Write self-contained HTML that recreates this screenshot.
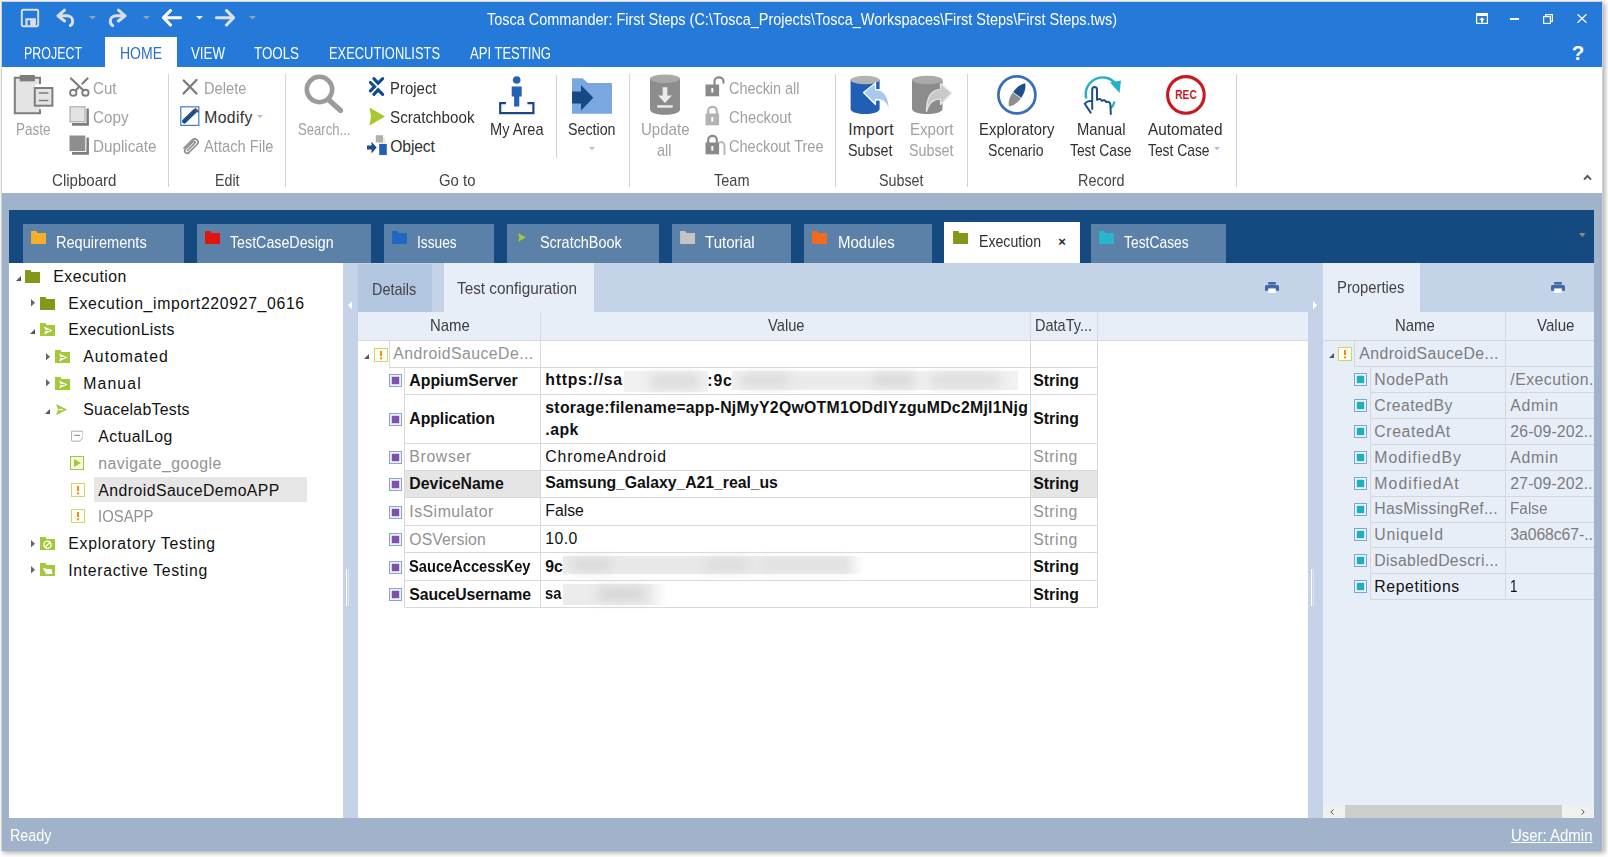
<!DOCTYPE html>
<html lang="en"><head><meta charset="utf-8"><title>Tosca Commander: First Steps</title><style>
html,body{margin:0;padding:0;}
body{width:1608px;height:857px;position:relative;overflow:hidden;background:#fff;font-family:'Liberation Sans', sans-serif;}
body>div,body>span,body>svg{position:absolute;display:block;}
body>span{white-space:pre;}
</style></head><body>
<div style="left:1.2px;top:1.2px;width:1601.6px;height:850px;background:#d3d2cd;box-shadow:2px 2px 5px rgba(0,0,0,.33);"></div>
<div style="left:2px;top:2px;width:1600px;height:849px;background:#a1b3cb;"></div>
<div style="left:2px;top:2px;width:1600px;height:65px;background:#257ad9;"></div>
<div style="left:2px;top:67px;width:1600px;height:126px;background:#fff;"></div>
<div style="left:105px;top:37px;width:72px;height:30px;background:#fff;"></div>
<div style="left:9.4px;top:210px;width:1584.7px;height:52.6px;background:#154a80;"></div>
<div style="left:9.3px;top:262.6px;width:333.7px;height:555.2px;background:#fff;"></div>
<div style="left:343px;top:262.6px;width:15px;height:555.2px;background:#c4d3e7;"></div>
<div style="left:358px;top:262.6px;width:950px;height:49.4px;background:#c4d3e7;"></div>
<div style="left:358px;top:312px;width:950px;height:28px;background:#e8eef8;"></div>
<div style="left:358px;top:340px;width:950px;height:477.8px;background:#fff;"></div>
<div style="left:1308px;top:262.6px;width:15px;height:555.2px;background:#c4d3e7;"></div>
<div style="left:1323px;top:262.6px;width:271.1px;height:49.4px;background:#c4d3e7;"></div>
<div style="left:1323px;top:312px;width:271.1px;height:505.8px;background:#e8eef8;"></div>
<div style="left:346px;top:569px;width:1.1px;height:37px;background:#fff;"></div>
<div style="left:348.1px;top:569px;width:0.9px;height:37px;background:#dde7f4;"></div>
<div style="left:1311px;top:569px;width:1.1px;height:37px;background:#fff;"></div>
<div style="left:1313.1px;top:569px;width:0.9px;height:37px;background:#dde7f4;"></div>
<svg style="left:348px;top:301px;" width="4.2" height="8.4" viewBox="0 0 4.2 8.4"><path d="M4.200 0v8.400L0 4.200z" fill="#fff"/></svg>
<svg style="left:1312.6px;top:301px;" width="4.2" height="8.4" viewBox="0 0 4.2 8.4"><path d="M0 0v8.400l4.200-4.200z" fill="#fff"/></svg>
<span style="left:487.3px;top:8.00px;line-height:23px;font-size:16.4px;color:#fff;transform:scaleX(0.8826);transform-origin:0 0;">Tosca Commander: First Steps (C:\Tosca_Projects\Tosca_Workspaces\First Steps\First Steps.tws)</span>
<span style="left:24.3px;top:43.00px;line-height:22px;font-size:15.7px;color:#fff;transform:scaleX(0.7921);transform-origin:0 0;">PROJECT</span>
<span style="left:120.3px;top:43.00px;line-height:22px;font-size:15.7px;color:#2a6fc4;transform:scaleX(0.8924);transform-origin:0 0;">HOME</span>
<span style="left:191.3px;top:43.00px;line-height:22px;font-size:15.7px;color:#fff;transform:scaleX(0.8480);transform-origin:0 0;">VIEW</span>
<span style="left:254.3px;top:43.00px;line-height:22px;font-size:15.7px;color:#fff;transform:scaleX(0.8506);transform-origin:0 0;">TOOLS</span>
<span style="left:329.3px;top:43.00px;line-height:22px;font-size:15.7px;color:#fff;transform:scaleX(0.8215);transform-origin:0 0;">EXECUTIONLISTS</span>
<span style="left:470.3px;top:43.00px;line-height:22px;font-size:15.7px;color:#fff;transform:scaleX(0.8321);transform-origin:0 0;">API TESTING</span>
<span style="left:1571.8px;top:38.00px;line-height:29px;font-size:20.5px;color:#fff;letter-spacing:-0.03px;font-weight:700;">?</span>
<span style="left:16.3px;top:119.00px;line-height:22px;font-size:15.7px;color:#a0a0a0;transform:scaleX(0.8598);transform-origin:0 0;">Paste</span>
<span style="left:93.3px;top:78.00px;line-height:22px;font-size:15.7px;color:#a0a0a0;transform:scaleX(0.9623);transform-origin:0 0;">Cut</span>
<span style="left:93.3px;top:107.00px;line-height:22px;font-size:15.7px;color:#a0a0a0;transform:scaleX(0.9693);transform-origin:0 0;">Copy</span>
<span style="left:93.3px;top:136.00px;line-height:22px;font-size:15.7px;color:#a0a0a0;transform:scaleX(0.9709);transform-origin:0 0;">Duplicate</span>
<span style="left:52.3px;top:170.00px;line-height:22px;font-size:15.7px;color:#444;transform:scaleX(0.9604);transform-origin:0 0;">Clipboard</span>
<span style="left:204.3px;top:78.00px;line-height:22px;font-size:15.7px;color:#a0a0a0;transform:scaleX(0.9370);transform-origin:0 0;">Delete</span>
<span style="left:204.3px;top:107.00px;line-height:22px;font-size:15.7px;color:#303030;letter-spacing:0.38px;">Modify</span>
<span style="left:204.3px;top:136.00px;line-height:22px;font-size:15.7px;color:#a0a0a0;transform:scaleX(0.9376);transform-origin:0 0;">Attach File</span>
<span style="left:215.3px;top:170.00px;line-height:22px;font-size:15.7px;color:#444;transform:scaleX(0.9058);transform-origin:0 0;">Edit</span>
<span style="left:298.3px;top:119.00px;line-height:22px;font-size:15.7px;color:#a0a0a0;transform:scaleX(0.8362);transform-origin:0 0;">Search...</span>
<span style="left:390.3px;top:78.00px;line-height:22px;font-size:15.7px;color:#303030;transform:scaleX(0.9523);transform-origin:0 0;">Project</span>
<span style="left:390.3px;top:107.00px;line-height:22px;font-size:15.7px;color:#303030;transform:scaleX(0.9690);transform-origin:0 0;">Scratchbook</span>
<span style="left:390.3px;top:136.00px;line-height:22px;font-size:15.7px;color:#303030;letter-spacing:-0.14px;">Object</span>
<span style="left:490.3px;top:119.00px;line-height:22px;font-size:15.7px;color:#303030;transform:scaleX(0.9297);transform-origin:0 0;">My Area</span>
<span style="left:439.3px;top:170.00px;line-height:22px;font-size:15.7px;color:#444;transform:scaleX(0.9511);transform-origin:0 0;">Go to</span>
<span style="left:568.3px;top:119.00px;line-height:22px;font-size:15.7px;color:#303030;transform:scaleX(0.9077);transform-origin:0 0;">Section</span>
<span style="left:641.3px;top:119.00px;line-height:22px;font-size:15.7px;color:#a0a0a0;transform:scaleX(0.9586);transform-origin:0 0;">Update</span>
<span style="left:657.3px;top:140.00px;line-height:22px;font-size:15.7px;color:#a0a0a0;transform:scaleX(0.9234);transform-origin:0 0;">all</span>
<span style="left:729.3px;top:78.00px;line-height:22px;font-size:15.7px;color:#a0a0a0;transform:scaleX(0.9188);transform-origin:0 0;">Checkin all</span>
<span style="left:729.3px;top:107.00px;line-height:22px;font-size:15.7px;color:#a0a0a0;transform:scaleX(0.9430);transform-origin:0 0;">Checkout</span>
<span style="left:729.3px;top:136.00px;line-height:22px;font-size:15.7px;color:#a0a0a0;transform:scaleX(0.9262);transform-origin:0 0;">Checkout Tree</span>
<span style="left:714.3px;top:170.00px;line-height:22px;font-size:15.7px;color:#444;transform:scaleX(0.9251);transform-origin:0 0;">Team</span>
<span style="left:848.3px;top:119.00px;line-height:22px;font-size:15.7px;color:#303030;letter-spacing:0.17px;">Import</span>
<span style="left:848.3px;top:140.00px;line-height:22px;font-size:15.7px;color:#303030;transform:scaleX(0.9111);transform-origin:0 0;">Subset</span>
<span style="left:910.3px;top:119.00px;line-height:22px;font-size:15.7px;color:#a0a0a0;transform:scaleX(0.9593);transform-origin:0 0;">Export</span>
<span style="left:909.3px;top:140.00px;line-height:22px;font-size:15.7px;color:#a0a0a0;transform:scaleX(0.9111);transform-origin:0 0;">Subset</span>
<span style="left:879.3px;top:170.00px;line-height:22px;font-size:15.7px;color:#444;transform:scaleX(0.9111);transform-origin:0 0;">Subset</span>
<span style="left:979.3px;top:119.00px;line-height:22px;font-size:15.7px;color:#303030;transform:scaleX(0.9516);transform-origin:0 0;">Exploratory</span>
<span style="left:988.3px;top:140.00px;line-height:22px;font-size:15.7px;color:#303030;transform:scaleX(0.8963);transform-origin:0 0;">Scenario</span>
<span style="left:1077.3px;top:119.00px;line-height:22px;font-size:15.7px;color:#303030;transform:scaleX(0.9426);transform-origin:0 0;">Manual</span>
<span style="left:1070.3px;top:140.00px;line-height:22px;font-size:15.7px;color:#303030;transform:scaleX(0.8817);transform-origin:0 0;">Test Case</span>
<span style="left:1148.3px;top:119.00px;line-height:22px;font-size:15.7px;color:#303030;transform:scaleX(0.9819);transform-origin:0 0;">Automated</span>
<span style="left:1148.3px;top:140.00px;line-height:22px;font-size:15.7px;color:#303030;transform:scaleX(0.8817);transform-origin:0 0;">Test Case</span>
<span style="left:1078.3px;top:170.00px;line-height:22px;font-size:15.7px;color:#444;transform:scaleX(0.9194);transform-origin:0 0;">Record</span>
<div style="left:168px;top:74px;width:1px;height:113px;background:#d4d4d4;"></div>
<div style="left:285px;top:74px;width:1px;height:113px;background:#d4d4d4;"></div>
<div style="left:629px;top:74px;width:1px;height:113px;background:#d4d4d4;"></div>
<div style="left:835px;top:74px;width:1px;height:113px;background:#d4d4d4;"></div>
<div style="left:967px;top:74px;width:1px;height:113px;background:#d4d4d4;"></div>
<div style="left:1236px;top:74px;width:1px;height:113px;background:#d4d4d4;"></div>
<div style="left:556px;top:75px;width:1px;height:83px;background:#d4d4d4;"></div>
<svg style="left:20px;top:8px;" width="20" height="20" viewBox="0 0 20 20"><rect x="1.8" y="1.8" width="16.4" height="16.4" rx="1.2" fill="none" stroke="#dcdfe6" stroke-width="1.9"/><path d="M5.4 10.2h10.5v7.2H5.4z M7.6 12.2v5.2h2.6v-5.2z" fill="#dcdfe6" fill-rule="evenodd"/></svg>
<svg style="left:56px;top:8px;" width="19" height="19" viewBox="0 0 19 19"><path d="M8.5 2.2L2 7.8l6.5 5.2" fill="none" stroke="#dcdfe6" stroke-width="3" stroke-linejoin="round" stroke-linecap="round"/><path d="M2.5 7.8h8.2c3.6 0 6 2.3 6 5.2 0 2-.9 3.7-2.3 4.6" fill="none" stroke="#dcdfe6" stroke-width="3" stroke-linecap="round"/></svg>
<svg style="left:108px;top:8px;" width="19" height="19" viewBox="0 0 19 19"><path d="M10.5 2.2L17 7.8l-6.500 5.2" fill="none" stroke="#dcdfe6" stroke-width="3" stroke-linejoin="round" stroke-linecap="round"/><path d="M16.5 7.800H8.300c-3.600 0-6 2.300-6 5.200 0 2 .9 3.700 2.300 4.600" fill="none" stroke="#dcdfe6" stroke-width="3" stroke-linecap="round"/></svg>
<svg style="left:162px;top:9px;" width="20" height="18" viewBox="0 0 20 18"><path d="M8.500 1.500L1.500 8.700l7 7.300M2 8.700h16.500" fill="none" stroke="#fff" stroke-width="3.1" stroke-linecap="round" stroke-linejoin="round"/></svg>
<svg style="left:215px;top:9px;" width="20" height="18" viewBox="0 0 20 18"><path d="M11.500 1.500L18.500 8.700l-7 7.300M18 8.700H1.500" fill="none" stroke="#dcdfe6" stroke-width="3.1" stroke-linecap="round" stroke-linejoin="round"/></svg>
<svg style="left:89px;top:16px;" width="7" height="4" viewBox="0 0 7 4"><path d="M0 0h7L3.500 3.600z" fill="#9a9fae"/></svg>
<svg style="left:142.5px;top:16px;" width="7" height="4" viewBox="0 0 7 4"><path d="M0 0h7L3.500 3.600z" fill="#9a9fae"/></svg>
<svg style="left:195.5px;top:16px;" width="7" height="4" viewBox="0 0 7 4"><path d="M0 0h7L3.500 3.600z" fill="#e8eef8"/></svg>
<svg style="left:249px;top:16px;" width="7" height="4" viewBox="0 0 7 4"><path d="M0 0h7L3.500 3.600z" fill="#9a9fae"/></svg>
<svg style="left:1476px;top:13px;" width="12" height="11" viewBox="0 0 12 11"><rect x=".6" y=".6" width="10.800" height="9.800" fill="none" stroke="#fff" stroke-width="1.200"/><rect x=".6" y=".6" width="10.800" height="2.400" fill="#fff"/><path d="M6 4.200l2.800 2.800H7v2.400H5V7H3.200z" fill="#fff"/></svg>
<div style="left:1510px;top:18.3px;width:9px;height:1.5px;background:#fff;"></div>
<svg style="left:1543px;top:14px;" width="10" height="10" viewBox="0 0 10 10"><rect x=".6" y="2.600" width="6.800" height="6.800" fill="none" stroke="#fff" stroke-width="1.200"/><path d="M2.600 2.600V.6h6.800v6.800h-2" fill="none" stroke="#fff" stroke-width="1.200"/></svg>
<svg style="left:1576.8px;top:13.5px;" width="10" height="9" viewBox="0 0 10 9"><path d="M.5 .3l9 8.400M9.500 .3l-9 8.400" stroke="#fff" stroke-width="1.300"/></svg>
<svg style="left:1583px;top:173.5px;" width="9" height="6.5" viewBox="0 0 9 6.5"><path d="M1 5.600L4.500 1.900l3.500 3.700" fill="none" stroke="#555" stroke-width="1.900"/></svg>
<svg style="left:13px;top:74px;" width="42" height="42" viewBox="0 0 42 42"><path d="M1.800 3.800H27v6.500h-4.500v19.500H27v9.400H1.800z" fill="#e4e4e4"/><path d="M27 10V3.800H1.800v35.400H27v-4" fill="none" stroke="#7d7d7d" stroke-width="2"/><rect x="6.800" y="1" width="15" height="6.400" fill="#7d7d7d"/><rect x="21.800" y="14" width="17.600" height="17.700" fill="#e4e4e4" stroke="#7d7d7d" stroke-width="2"/><path d="M25.800 19h9.600M25.800 26.500h9.600" stroke="#7d7d7d" stroke-width="1.600"/></svg>
<svg style="left:69px;top:77px;" width="21" height="20" viewBox="0 0 21 20"><path d="M2 1.500L14.500 13.500M18.500 1.500L13.500 6.500" stroke="#7d7d7d" stroke-width="2.300" stroke-linecap="round"/><path d="M10.500 9.500L6.500 13.500" stroke="#7d7d7d" stroke-width="2.300"/><ellipse cx="4.300" cy="15.800" rx="3.200" ry="3" fill="none" stroke="#7d7d7d" stroke-width="1.900"/><ellipse cx="16.400" cy="15.800" rx="3.200" ry="3" fill="none" stroke="#7d7d7d" stroke-width="1.900"/></svg>
<svg style="left:69px;top:106px;" width="21" height="21" viewBox="0 0 21 21"><path d="M3 16.9H17.4V2.6H19.9V19.7H3z" fill="#7d7d7d"/><rect x="1" y=".8" width="15" height="15" fill="#e3e3e3" stroke="#a0a0a0" stroke-width="1"/></svg>
<svg style="left:69px;top:135px;" width="21" height="21" viewBox="0 0 21 21"><path d="M3 16.9H17.4V2.6H19.9V19.7H3z" fill="#7d7d7d"/><rect x=".5" y=".5" width="15.800" height="15.600" fill="#8e8e8e"/></svg>
<svg style="left:181px;top:78px;" width="18" height="18" viewBox="0 0 18 18"><path d="M2.800 2.500L15.500 15.500M15.500 2L2.500 15.500" stroke="#7d7d7d" stroke-width="2.400" stroke-linecap="round"/></svg>
<svg style="left:180px;top:106px;" width="21" height="21" viewBox="0 0 21 21"><rect x=".8" y=".8" width="18" height="18.600" fill="#fff" stroke="#3c7cc8" stroke-width="1.200"/><path d="M4.200 15.300L14.800 5.200" stroke="#1c4e87" stroke-width="4.400" stroke-linecap="round"/><path d="M15.600 1.800l3.400 3.400-1.600 1.500-3.300-3.500z" fill="#555"/></svg>
<svg style="left:257px;top:114.5px;" width="6" height="3" viewBox="0 0 6 3"><path d="M0 0h6L3 3z" fill="#a8c0e0"/></svg>
<svg style="left:181px;top:136px;" width="19" height="20" viewBox="0 0 19 20"><path d="M6.500 14.500l7-7c1.200-1.200 0-3-1.500-1.800L4.500 13c-2.300 2.300.8 5.800 3.500 3.500l8-8c3-3.400-1.500-7.500-4.800-4.500L3 12" fill="none" stroke="#8c8c8c" stroke-width="1.700" stroke-linecap="round" stroke-linejoin="round"/></svg>
<svg style="left:302px;top:72px;" width="42" height="42" viewBox="0 0 42 42"><circle cx="17.500" cy="17.500" r="12.700" fill="none" stroke="#9b9b9b" stroke-width="4.600"/><path d="M27.500 28.500L38.500 38.500" stroke="#9b9b9b" stroke-width="5.200" stroke-linecap="round"/></svg>
<svg style="left:367px;top:76px;" width="19" height="22" viewBox="0 0 19 22"><path d="M6.900 2.650L11.100 7.200 15.650 2.650M3.400 6.500L7.600 10.700 3.400 14.900M6.900 18.400L11.100 13.850 15.650 18.400" fill="none" stroke="#114a8c" stroke-width="3.100" stroke-linecap="round" stroke-linejoin="miter"/></svg>
<svg style="left:368.5px;top:106.5px;" width="16" height="19" viewBox="0 0 16 19"><path d="M.5 .5L16 9.500 .5 18.500l1.500-9z" fill="#a9c72f"/></svg>
<svg style="left:366px;top:134px;" width="22" height="22" viewBox="0 0 22 22"><rect x="12.500" y="3.500" width="7" height="7" fill="#ededdf"/><rect x="9.800" y="1.200" width="7.200" height="7.200" fill="#b0b0b0"/><rect x="13.200" y="10" width="7.600" height="11" fill="#2261b5"/><path d="M1 11.600h4.500V7.800l5.200 5.800-5.200 5.800v-3.800H1z" fill="#1c4e87"/></svg>
<svg style="left:497px;top:74px;" width="40" height="42" viewBox="0 0 40 42"><circle cx="19.700" cy="6" r="3.800" fill="#2261b5"/><path d="M14.700 12.500h10v10h-2.400v10.100h-5.200V22.500h-2.400z" fill="#2261b5"/><path d="M9 29.200H3.200v9.900h33.200v-9.900h-6" fill="none" stroke="#1c4786" stroke-width="2.200"/></svg>
<svg style="left:571px;top:77px;" width="42" height="38" viewBox="0 0 42 38"><path d="M1 1.300h10.500L17 6h24v30.800H1z" fill="#7aa7e0"/><path d="M1 14.500h9V8l12.300 12.700L10 33.400v-7H1z" fill="#174a82"/></svg>
<svg style="left:588.5px;top:147px;" width="6" height="3.2" viewBox="0 0 6 3.2"><path d="M0 0h6L3 3.200z" fill="#a8c0e0"/></svg>
<svg style="left:648px;top:73px;" width="34" height="43" viewBox="0 0 34 43"><path d="M2 5.6v31c0 7 30 7 30 0v-31z" fill="#8c8c8c"/><ellipse cx="17.0" cy="5.800000000000001" rx="15.0" ry="4.200" fill="#a9a9a9"/><path d="M14.700 14.200h4.600v8.200h4.600L17 30l-6.900-7.600h4.600z" fill="#ebebeb"/><rect x="9.200" y="32.200" width="15.500" height="2.500" fill="#ebebeb"/></svg>
<svg style="left:704.5px;top:76px;" width="21" height="21" viewBox="0 0 21 21"><path d="M9.500 9.500V5.500c0-5.500 9-5.500 9 0v2" fill="none" stroke="#8a8a8a" stroke-width="2.200"/><rect x=".5" y="8.500" width="13.600" height="11.800" fill="#8a8a8a"/><rect x="6.300" y="12" width="2" height="4.600" fill="#fff"/></svg>
<svg style="left:704.5px;top:105px;" width="21" height="21" viewBox="0 0 21 21"><path d="M3.200 9.500V6c0-5.500 8.600-5.500 8.600 0v3.500" fill="none" stroke="#b3b3b3" stroke-width="2.200"/><rect x=".5" y="8.500" width="13.600" height="11.800" fill="#b3b3b3"/><rect x="6.300" y="12" width="2" height="4.600" fill="#fff"/></svg>
<svg style="left:704.5px;top:134px;" width="21" height="21" viewBox="0 0 21 21"><path d="M14 8.500c3-1 5.500 0 5.500 3.500v12h-3" fill="none" stroke="#b9b9b9" stroke-width="2"/><path d="M3.200 9.500V6c0-5.500 8.600-5.500 8.600 0v3.500" fill="none" stroke="#8a8a8a" stroke-width="2.200"/><rect x=".5" y="8.500" width="13.600" height="11.800" fill="#8a8a8a"/><rect x="6.300" y="12" width="2" height="4.600" fill="#fff"/></svg>
<svg style="left:848px;top:73px;" width="46" height="44" viewBox="0 0 46 44"><path d="M2.6 6.8v29c0 7 29 7 29 0v-29z" fill="#1f5fb4"/><ellipse cx="17.1" cy="7.0" rx="14.5" ry="4.200" fill="#b3b3b3"/><path d="M15.500 19.500L27.500 10v6.500c9.500 0 14 7 14 22.500-2.500-9.500-6.500-12.500-14-12.500V31.500z" fill="#a6c9f0" stroke="#fff" stroke-width="1.300" stroke-linejoin="round"/></svg>
<svg style="left:909px;top:73px;" width="46" height="44" viewBox="0 0 46 44"><path d="M3 6.8v29c0 7 30.5 7 30.5 0v-29z" fill="#8c8c8c"/><ellipse cx="18.25" cy="7.0" rx="15.25" ry="4.200" fill="#aaaaaa"/><path d="M42.500 20L31.500 10.500v6c-9.500 0-14 7-14 22 3-9.500 7-12.500 14-12.500v5.500z" fill="#c9c9c9" stroke="#e6e6e6" stroke-width="1.200" stroke-linejoin="round"/></svg>
<svg style="left:995px;top:72.5px;" width="44" height="44" viewBox="0 0 44 44"><circle cx="21.900" cy="21.900" r="18.500" fill="none" stroke="#3a6ebd" stroke-width="2.700"/><path d="M17.900 19.300Q23.500 11.500 30.200 10.300Q31.500 17.500 26 25.200z" fill="#1c4e87"/><path d="M17.900 19.300L26 25.200Q20.500 32.500 14 33.600Q12.500 27 17.900 19.300z" fill="#8e8e8e"/><path d="M17.900 19.300l8.100 5.900" stroke="#dfe7f3" stroke-width="1"/></svg>
<svg style="left:1078px;top:74px;" width="46" height="42" viewBox="0 0 46 42"><path d="M8.300 24.500A16.800 16.800 0 0 1 37.500 9.500" fill="none" stroke="#23b1c4" stroke-width="2.400"/><path d="M32 8.500L43 6.500 41.500 19z" fill="#23b1c4"/><path d="M36.500 27.500c-.6 2.600-1.800 4.800-3.500 6.500" fill="none" stroke="#23b1c4" stroke-width="2.200"/><path d="M14.200 35V15.500c0-3.400 4.800-3.400 4.800 0v10.300c2.200-1.400 4.300-.8 4.700 1 2-1.200 4-.5 4.400 1.300 2.200-.9 4.200.2 4.300 2.600l.4 9.300M14.200 27.500c-2.500-1.300-6 .2-7.500 2.300l6 8.800" fill="none" stroke="#1c4e87" stroke-width="2" stroke-linejoin="round" stroke-linecap="round"/></svg>
<svg style="left:1163.5px;top:72.5px;" width="44" height="44" viewBox="0 0 44 44"><circle cx="21.900" cy="21.900" r="18.300" fill="none" stroke="#c9181f" stroke-width="3.100"/><text x="22" y="25.700" text-anchor="middle" font-family="Liberation Sans, sans-serif" font-weight="700" font-size="13" textLength="21.500" lengthAdjust="spacingAndGlyphs" fill="#c9181f">REC</text></svg>
<svg style="left:1214.4px;top:147.2px;" width="6" height="3.2" viewBox="0 0 6 3.2"><path d="M0 0h6L3 3.200z" fill="#a8c0e0"/></svg>
<svg style="left:1264.5px;top:281.5px;" width="14" height="11" viewBox="0 0 14 11"><rect x="3.200" y="0" width="7.600" height="2.600" fill="#3f6aa6"/><path d="M0 4.500a1.500 1.500 0 0 1 1.500-1.500h11a1.500 1.500 0 0 1 1.500 1.500v4.300H0z" fill="#3f6aa6"/><rect x="3.200" y="6.400" width="7.600" height="4.400" fill="#fff"/></svg>
<svg style="left:1550.5px;top:281.5px;" width="14" height="11" viewBox="0 0 14 11"><rect x="3.200" y="0" width="7.600" height="2.600" fill="#3f6aa6"/><path d="M0 4.500a1.500 1.500 0 0 1 1.500-1.500h11a1.500 1.500 0 0 1 1.500 1.500v4.300H0z" fill="#3f6aa6"/><rect x="3.200" y="6.400" width="7.600" height="4.400" fill="#fff"/></svg>
<div style="left:23px;top:223.6px;width:161px;height:39px;background:#5b81a9;"></div>
<span style="left:56.3px;top:232.00px;line-height:22px;font-size:15.8px;color:#fff;transform:scaleX(0.9223);transform-origin:0 0;">Requirements</span>
<svg style="left:31.3px;top:230.5px;" width="15.2" height="13.6" viewBox="0 0 15.5 14"><path d="M0 0h5.5l1 2H15.5v12H0z" fill="#f9ae2b"/></svg>
<div style="left:197px;top:223.6px;width:174px;height:39px;background:#5b81a9;"></div>
<span style="left:230.3px;top:232.00px;line-height:22px;font-size:15.8px;color:#fff;transform:scaleX(0.9015);transform-origin:0 0;">TestCaseDesign</span>
<svg style="left:205.3px;top:230.5px;" width="15.2" height="13.6" viewBox="0 0 15.5 14"><path d="M0 0h5.5l1 2H15.5v12H0z" fill="#e0160e"/></svg>
<div style="left:384px;top:223.6px;width:110px;height:39px;background:#5b81a9;"></div>
<span style="left:417.3px;top:232.00px;line-height:22px;font-size:15.8px;color:#fff;transform:scaleX(0.8695);transform-origin:0 0;">Issues</span>
<svg style="left:392.3px;top:230.5px;" width="15.2" height="13.6" viewBox="0 0 15.5 14"><path d="M0 0h5.5l1 2H15.5v12H0z" fill="#2366c0"/></svg>
<div style="left:507px;top:223.6px;width:152px;height:39px;background:#5b81a9;"></div>
<span style="left:540.3px;top:232.00px;line-height:22px;font-size:15.8px;color:#fff;transform:scaleX(0.9122);transform-origin:0 0;">ScratchBook</span>
<div style="left:672px;top:223.6px;width:119px;height:39px;background:#5b81a9;"></div>
<span style="left:705.3px;top:232.00px;line-height:22px;font-size:15.8px;color:#fff;transform:scaleX(0.9540);transform-origin:0 0;">Tutorial</span>
<svg style="left:680.3px;top:230.5px;" width="15.2" height="13.6" viewBox="0 0 15.5 14"><path d="M0 0h5.5l1 2H15.5v12H0z" fill="#c4c4c4"/></svg>
<div style="left:804px;top:223.6px;width:128px;height:39px;background:#5b81a9;"></div>
<span style="left:838.3px;top:232.00px;line-height:22px;font-size:15.8px;color:#fff;transform:scaleX(0.9495);transform-origin:0 0;">Modules</span>
<svg style="left:812.3px;top:230.5px;" width="15.2" height="13.6" viewBox="0 0 15.5 14"><path d="M0 0h5.5l1 2H15.5v12H0z" fill="#f26a1b"/></svg>
<div style="left:1091px;top:223.6px;width:135px;height:39px;background:#5b81a9;"></div>
<span style="left:1124.3px;top:232.00px;line-height:22px;font-size:15.8px;color:#fff;transform:scaleX(0.8773);transform-origin:0 0;">TestCases</span>
<svg style="left:1099.3px;top:230.5px;" width="15.2" height="13.6" viewBox="0 0 15.5 14"><path d="M0 0h5.5l1 2H15.5v12H0z" fill="#27b6cc"/></svg>
<svg style="left:517.5px;top:233.3px;" width="8" height="8.8" viewBox="0 0 11 12"><path d="M0 0L11 6 0 12l2-6z" fill="#a5c83b"/></svg>
<div style="left:944px;top:222px;width:136px;height:40.6px;background:#fff;"></div>
<svg style="left:953.3px;top:230.5px;" width="15.2" height="13.6" viewBox="0 0 15.5 14"><path d="M0 0h5.5l1 2H15.5v12H0z" fill="#85961a"/></svg>
<span style="left:979.3px;top:231.00px;line-height:22px;font-size:15.8px;color:#303030;transform:scaleX(0.8937);transform-origin:0 0;">Execution</span>
<span style="left:1058.3px;top:233.00px;line-height:18px;font-size:13px;color:#222;letter-spacing:0.91px;font-weight:700;">×</span>
<svg style="left:1579.2px;top:233px;" width="6.6" height="4.2" viewBox="0 0 6.6 4.2"><path d="M0 0h6.600L3.300 4.200z" fill="#8d8a88"/></svg>
<div style="left:94px;top:477px;width:213px;height:25px;background:#e6e6e6;"></div>
<svg style="left:15.8px;top:275.6px;" width="5" height="5" viewBox="0 0 5 5"><path d="M5 0v5H0z" fill="#555"/></svg>
<svg style="left:24.5px;top:270px;" width="15" height="13" viewBox="0 0 15 13"><path d="M0 0h5.5l1 2H15v13H0z" fill="#85961a"/></svg>
<span style="left:53.3px;top:266.00px;line-height:22px;font-size:15.8px;color:#111;letter-spacing:0.46px;">Execution</span>
<svg style="left:31px;top:299.38px;" width="4" height="7.4" viewBox="0 0 4 7.4"><path d="M0 0l4 3.7-4 3.7z" fill="#666"/></svg>
<svg style="left:39.5px;top:296.68px;" width="15" height="13" viewBox="0 0 15 13"><path d="M0 0h5.5l1 2H15v13H0z" fill="#85961a"/></svg>
<span style="left:68.3px;top:293.00px;line-height:22px;font-size:15.8px;color:#111;letter-spacing:0.66px;">Execution_import220927_0616</span>
<svg style="left:29.8px;top:328.96px;" width="5" height="5" viewBox="0 0 5 5"><path d="M5 0v5H0z" fill="#555"/></svg>
<svg style="left:39.5px;top:323.36px;" width="15" height="13" viewBox="0 0 15 13"><path d="M0 0h5.5l1 2H15v13H0z" fill="#a5c83b"/><path d="M4 3.5l8.5 4-8.5 4 1.8-4z" fill="#fff"/><path d="M5.8 7.5h4" stroke="#a5c83b" stroke-width="1"/></svg>
<span style="left:68.3px;top:319.00px;line-height:22px;font-size:15.8px;color:#111;letter-spacing:0.33px;">ExecutionLists</span>
<svg style="left:46px;top:352.74px;" width="4" height="7.4" viewBox="0 0 4 7.4"><path d="M0 0l4 3.7-4 3.7z" fill="#666"/></svg>
<svg style="left:54.5px;top:350.04px;" width="15" height="13" viewBox="0 0 15 13"><path d="M0 0h5.5l1 2H15v13H0z" fill="#a5c83b"/><path d="M4 3.5l8.5 4-8.5 4 1.8-4z" fill="#fff"/><path d="M5.8 7.5h4" stroke="#a5c83b" stroke-width="1"/></svg>
<span style="left:83.3px;top:346.00px;line-height:22px;font-size:15.8px;color:#111;letter-spacing:1.01px;">Automated</span>
<svg style="left:46px;top:379.42px;" width="4" height="7.4" viewBox="0 0 4 7.4"><path d="M0 0l4 3.7-4 3.7z" fill="#666"/></svg>
<svg style="left:54.5px;top:376.72px;" width="15" height="13" viewBox="0 0 15 13"><path d="M0 0h5.5l1 2H15v13H0z" fill="#a5c83b"/><path d="M4 3.5l8.5 4-8.5 4 1.8-4z" fill="#fff"/><path d="M5.8 7.5h4" stroke="#a5c83b" stroke-width="1"/></svg>
<span style="left:83.3px;top:373.00px;line-height:22px;font-size:15.8px;color:#111;letter-spacing:1.11px;">Manual</span>
<svg style="left:44.8px;top:409px;" width="5" height="5" viewBox="0 0 5 5"><path d="M5 0v5H0z" fill="#555"/></svg>
<svg style="left:56.3px;top:404.1px;" width="11.2" height="11.2" viewBox="0 0 13 13"><path d="M0 0l13 6.5L0 13l2.5-6.5z" fill="#a5c83b"/><path d="M3 6.5h5" stroke="#fff" stroke-width="1.5"/></svg>
<span style="left:83.3px;top:399.00px;line-height:22px;font-size:15.8px;color:#111;letter-spacing:0.29px;">SuacelabTests</span>
<svg style="left:71px;top:429.78px;" width="12.4" height="13.2" viewBox="0 0 15 14"><path d="M1.5 .5h12a1 1 0 0 1 1 1v7l-4 4h-9a1 1 0 0 1-1-1v-10a1 1 0 0 1 1-1z" fill="#fff" stroke="#9a9a9a"/><path d="M4 5.5h7" stroke="#9a9a9a" stroke-width="1.5"/></svg>
<span style="left:98.3px;top:426.00px;line-height:22px;font-size:15.8px;color:#111;letter-spacing:0.47px;">ActualLog</span>
<svg style="left:70px;top:456.06px;" width="14" height="14" viewBox="0 0 14 14"><rect x=".5" y=".5" width="13" height="13" fill="#f4f9e2" stroke="#a5c83b"/><path d="M4 3l7 4-7 4z" fill="#a5c83b"/></svg>
<span style="left:98.3px;top:453.00px;line-height:22px;font-size:15.8px;color:#929292;letter-spacing:0.50px;">navigate_google</span>
<svg style="left:70.5px;top:482.74px;" width="14" height="14" viewBox="0 0 14 14"><rect x=".5" y=".5" width="13" height="13" fill="#fffdf0" stroke="#c9d76e"/><rect x="6" y="3" width="2" height="5" fill="#f08a1c"/><rect x="6" y="9.3" width="2" height="2" fill="#f08a1c"/></svg>
<span style="left:98.3px;top:480.00px;line-height:22px;font-size:15.8px;color:#111;letter-spacing:0.45px;">AndroidSauceDemoAPP</span>
<svg style="left:70.5px;top:509.42px;" width="14" height="14" viewBox="0 0 14 14"><rect x=".5" y=".5" width="13" height="13" fill="#fffdf0" stroke="#c9d76e"/><rect x="6" y="3" width="2" height="5" fill="#f08a1c"/><rect x="6" y="9.3" width="2" height="2" fill="#f08a1c"/></svg>
<span style="left:98.3px;top:506.00px;line-height:22px;font-size:15.8px;color:#929292;transform:scaleX(0.9434);transform-origin:0 0;">IOSAPP</span>
<svg style="left:31px;top:539.5px;" width="4" height="7.4" viewBox="0 0 4 7.4"><path d="M0 0l4 3.7-4 3.7z" fill="#666"/></svg>
<svg style="left:39.5px;top:536.8px;" width="15" height="13" viewBox="0 0 15 13"><path d="M0 0h5.5l1 2H15v13H0z" fill="#a5c83b"/><circle cx="7.5" cy="7.8" r="3.6" fill="none" stroke="#fff" stroke-width="1.3"/><path d="M5 10.3l5-5" stroke="#fff" stroke-width="1.3"/></svg>
<span style="left:68.3px;top:533.00px;line-height:22px;font-size:15.8px;color:#111;letter-spacing:0.71px;">Exploratory Testing</span>
<svg style="left:31px;top:566.18px;" width="4" height="7.4" viewBox="0 0 4 7.4"><path d="M0 0l4 3.7-4 3.7z" fill="#666"/></svg>
<svg style="left:39.5px;top:563.48px;" width="15" height="13" viewBox="0 0 15 13"><path d="M0 0h5.5l1 2H15v13H0z" fill="#a5c83b"/><path d="M3 5l4 1 4.5 0 1 5-6.5 0z" fill="#fff"/></svg>
<span style="left:68.3px;top:560.00px;line-height:22px;font-size:15.8px;color:#111;letter-spacing:0.66px;">Interactive Testing</span>
<div style="left:358px;top:264px;width:74px;height:48px;background:#b3c6df;"></div>
<span style="left:372.1px;top:279.00px;line-height:22px;font-size:15.7px;color:#444;transform:scaleX(0.9217);transform-origin:0 0;">Details</span>
<div style="left:444px;top:262.6px;width:150px;height:49.4px;background:#e8eef8;"></div>
<span style="left:457.3px;top:278.00px;line-height:22px;font-size:15.7px;color:#444;transform:scaleX(0.9759);transform-origin:0 0;">Test configuration</span>
<span style="left:429.8px;top:315.00px;line-height:22px;font-size:15.7px;color:#3c3c3c;transform:scaleX(0.9484);transform-origin:0 0;">Name</span>
<span style="left:767.8px;top:315.00px;line-height:22px;font-size:15.7px;color:#3c3c3c;transform:scaleX(0.9366);transform-origin:0 0;">Value</span>
<span style="left:1035.3px;top:315.00px;line-height:22px;font-size:15.7px;color:#3c3c3c;transform:scaleX(0.9252);transform-origin:0 0;">DataTy...</span>
<div style="left:540px;top:312px;width:1px;height:28px;background:#d9d9d9;"></div>
<div style="left:1030px;top:312px;width:1px;height:28px;background:#d9d9d9;"></div>
<div style="left:1097px;top:312px;width:1px;height:28px;background:#d9d9d9;"></div>
<div style="left:358px;top:340px;width:950px;height:1px;background:#d9d9d9;"></div>
<div style="left:405px;top:470px;width:135px;height:27px;background:#e5e5e5;"></div>
<div style="left:1031px;top:470px;width:66px;height:27px;background:#e5e5e5;"></div>
<div style="left:404px;top:367px;width:694px;height:1px;background:#d9d9d9;"></div>
<div style="left:404px;top:394px;width:694px;height:1px;background:#d9d9d9;"></div>
<div style="left:404px;top:443px;width:694px;height:1px;background:#d9d9d9;"></div>
<div style="left:404px;top:470px;width:694px;height:1px;background:#d9d9d9;"></div>
<div style="left:404px;top:497px;width:694px;height:1px;background:#d9d9d9;"></div>
<div style="left:404px;top:525px;width:694px;height:1px;background:#d9d9d9;"></div>
<div style="left:404px;top:552px;width:694px;height:1px;background:#d9d9d9;"></div>
<div style="left:404px;top:580px;width:694px;height:1px;background:#d9d9d9;"></div>
<div style="left:404px;top:607px;width:694px;height:1px;background:#d9d9d9;"></div>
<div style="left:389px;top:367px;width:709px;height:1px;background:#d9d9d9;"></div>
<div style="left:404px;top:367px;width:1px;height:240px;background:#d9d9d9;"></div>
<div style="left:389px;top:340px;width:1px;height:27px;background:#d9d9d9;"></div>
<div style="left:540px;top:340px;width:1px;height:267px;background:#d9d9d9;"></div>
<div style="left:1030px;top:340px;width:1px;height:267px;background:#d9d9d9;"></div>
<div style="left:1097px;top:340px;width:1px;height:267px;background:#d9d9d9;"></div>
<svg style="left:363.8px;top:353.8px;" width="5" height="5" viewBox="0 0 5 5"><path d="M5 0v5H0z" fill="#555"/></svg>
<svg style="left:373.5px;top:347.5px;" width="14" height="14" viewBox="0 0 14 14"><rect x=".5" y=".5" width="13" height="13" fill="#fffdf0" stroke="#c9d76e"/><rect x="6" y="3" width="2" height="5" fill="#f08a1c"/><rect x="6" y="9.3" width="2" height="2" fill="#f08a1c"/></svg>
<span style="left:393.3px;top:343.00px;line-height:22px;font-size:15.8px;color:#929292;letter-spacing:0.46px;">AndroidSauceDe...</span>
<svg style="left:389px;top:374.4px;" width="13" height="13" viewBox="0 0 13 13"><rect x=".5" y=".5" width="12" height="12" fill="#eef2fb" stroke="#8aa3cf"/><rect x="2.8" y="2.8" width="7.4" height="7.4" fill="#7b52ab"/></svg>
<span style="left:409.3px;top:370.00px;line-height:22px;font-size:15.8px;color:#111;letter-spacing:0.04px;font-weight:700;">AppiumServer</span>
<span style="left:545.3px;top:369.00px;line-height:22px;font-size:15.8px;color:#111;letter-spacing:0.73px;font-weight:700;">https://sa</span>
<span style="left:1033.3px;top:370.00px;line-height:22px;font-size:15.8px;color:#111;letter-spacing:-0.02px;font-weight:700;">String</span>
<svg style="left:389px;top:412.5px;" width="13" height="13" viewBox="0 0 13 13"><rect x=".5" y=".5" width="12" height="12" fill="#eef2fb" stroke="#8aa3cf"/><rect x="2.8" y="2.8" width="7.4" height="7.4" fill="#7b52ab"/></svg>
<span style="left:409.3px;top:408.00px;line-height:22px;font-size:15.8px;color:#111;letter-spacing:-0.05px;font-weight:700;">Application</span>
<span style="left:1033.3px;top:408.00px;line-height:22px;font-size:15.8px;color:#111;letter-spacing:-0.02px;font-weight:700;">String</span>
<svg style="left:389px;top:450.9px;" width="13" height="13" viewBox="0 0 13 13"><rect x=".5" y=".5" width="12" height="12" fill="#eef2fb" stroke="#8aa3cf"/><rect x="2.8" y="2.8" width="7.4" height="7.4" fill="#7b52ab"/></svg>
<span style="left:409.3px;top:446.00px;line-height:22px;font-size:15.8px;color:#929292;letter-spacing:0.65px;">Browser</span>
<span style="left:545.3px;top:446.00px;line-height:22px;font-size:15.8px;color:#111;letter-spacing:0.84px;">ChromeAndroid</span>
<span style="left:1033.3px;top:446.00px;line-height:22px;font-size:15.8px;color:#929292;letter-spacing:0.54px;">String</span>
<svg style="left:389px;top:477.7px;" width="13" height="13" viewBox="0 0 13 13"><rect x=".5" y=".5" width="12" height="12" fill="#eef2fb" stroke="#8aa3cf"/><rect x="2.8" y="2.8" width="7.4" height="7.4" fill="#7b52ab"/></svg>
<span style="left:409.3px;top:473.00px;line-height:22px;font-size:15.8px;color:#111;letter-spacing:0.05px;font-weight:700;">DeviceName</span>
<span style="left:545.3px;top:472.00px;line-height:22px;font-size:15.8px;color:#111;letter-spacing:-0.04px;font-weight:700;">Samsung_Galaxy_A21_real_us</span>
<span style="left:1033.3px;top:473.00px;line-height:22px;font-size:15.8px;color:#111;letter-spacing:-0.02px;font-weight:700;">String</span>
<svg style="left:389px;top:505.8px;" width="13" height="13" viewBox="0 0 13 13"><rect x=".5" y=".5" width="12" height="12" fill="#eef2fb" stroke="#8aa3cf"/><rect x="2.8" y="2.8" width="7.4" height="7.4" fill="#7b52ab"/></svg>
<span style="left:409.3px;top:501.00px;line-height:22px;font-size:15.8px;color:#929292;letter-spacing:0.50px;">IsSimulator</span>
<span style="left:545.3px;top:500.00px;line-height:22px;font-size:15.8px;color:#111;letter-spacing:-0.03px;">False</span>
<span style="left:1033.3px;top:501.00px;line-height:22px;font-size:15.8px;color:#929292;letter-spacing:0.54px;">String</span>
<svg style="left:389px;top:533.3px;" width="13" height="13" viewBox="0 0 13 13"><rect x=".5" y=".5" width="12" height="12" fill="#eef2fb" stroke="#8aa3cf"/><rect x="2.8" y="2.8" width="7.4" height="7.4" fill="#7b52ab"/></svg>
<span style="left:409.3px;top:529.00px;line-height:22px;font-size:15.8px;color:#929292;letter-spacing:0.11px;">OSVersion</span>
<span style="left:545.3px;top:528.00px;line-height:22px;font-size:15.8px;color:#111;letter-spacing:0.44px;">10.0</span>
<span style="left:1033.3px;top:529.00px;line-height:22px;font-size:15.8px;color:#929292;letter-spacing:0.54px;">String</span>
<svg style="left:389px;top:560.9px;" width="13" height="13" viewBox="0 0 13 13"><rect x=".5" y=".5" width="12" height="12" fill="#eef2fb" stroke="#8aa3cf"/><rect x="2.8" y="2.8" width="7.4" height="7.4" fill="#7b52ab"/></svg>
<span style="left:409.3px;top:556.00px;line-height:22px;font-size:15.8px;color:#111;transform:scaleX(0.9285);transform-origin:0 0;font-weight:700;">SauceAccessKey</span>
<span style="left:545.3px;top:556.00px;line-height:22px;font-size:15.8px;color:#111;letter-spacing:-0.04px;font-weight:700;">9c</span>
<span style="left:1033.3px;top:556.00px;line-height:22px;font-size:15.8px;color:#111;letter-spacing:-0.02px;font-weight:700;">String</span>
<svg style="left:389px;top:588.3px;" width="13" height="13" viewBox="0 0 13 13"><rect x=".5" y=".5" width="12" height="12" fill="#eef2fb" stroke="#8aa3cf"/><rect x="2.8" y="2.8" width="7.4" height="7.4" fill="#7b52ab"/></svg>
<span style="left:409.3px;top:584.00px;line-height:22px;font-size:15.8px;color:#111;letter-spacing:-0.11px;font-weight:700;">SauceUsername</span>
<span style="left:545.3px;top:583.00px;line-height:22px;font-size:15.8px;color:#111;transform:scaleX(0.9387);transform-origin:0 0;font-weight:700;">sa</span>
<span style="left:1033.3px;top:584.00px;line-height:22px;font-size:15.8px;color:#111;letter-spacing:-0.02px;font-weight:700;">String</span>
<span style="left:545.3px;top:397.00px;line-height:22px;font-size:15.8px;color:#111;letter-spacing:0.28px;font-weight:700;">storage:filename=app-NjMyY2QwOTM1ODdlYzguMDc2MjI1Njg</span>
<span style="left:545.3px;top:419.00px;line-height:22px;font-size:15.8px;color:#111;letter-spacing:0.47px;font-weight:700;">.apk</span>
<span style="left:707.3px;top:370.00px;line-height:22px;font-size:15.8px;color:#111;letter-spacing:0.89px;font-weight:700;">:9c</span>
<div style="left:624px;top:371px;width:84px;height:21px;background:#f1f1f1;"></div>
<div style="left:650px;top:375px;width:50px;height:13px;background:#d9d9d9;filter:blur(6px);"></div>
<div style="left:732px;top:371px;width:286px;height:19px;background:#f1f1f1;"></div>
<div style="left:740px;top:375px;width:50px;height:11px;background:#d6d6d6;filter:blur(6px);"></div>
<div style="left:790px;top:377px;width:90px;height:8px;background:#e4e4e4;filter:blur(5px);"></div>
<div style="left:875px;top:375px;width:40px;height:11px;background:#d2d2d2;filter:blur(6px);"></div>
<div style="left:930px;top:375px;width:70px;height:11px;background:#d8d8d8;filter:blur(6px);"></div>
<div style="left:563px;top:556px;width:301px;height:17.5px;background:linear-gradient(90deg,#ececec 0,#ececec 94%,rgba(236,236,236,0) 100%);"></div>
<div style="left:572px;top:560px;width:40px;height:10px;background:#d2d2d2;filter:blur(6px);"></div>
<div style="left:705px;top:560px;width:45px;height:10px;background:#d6d6d6;filter:blur(6px);"></div>
<div style="left:760px;top:561px;width:90px;height:8px;background:#d9d9d9;filter:blur(6px);"></div>
<div style="left:620px;top:563px;width:80px;height:5px;background:#e0e0e0;filter:blur(5px);"></div>
<div style="left:563px;top:584px;width:105px;height:20.5px;background:linear-gradient(90deg,#ececec 0,#ececec 82%,rgba(236,236,236,0) 100%);"></div>
<div style="left:598px;top:588px;width:47px;height:12px;background:#d2d2d2;filter:blur(6px);"></div>
<div style="left:1323px;top:262.6px;width:97px;height:49.4px;background:#e8eef8;"></div>
<span style="left:1336.8px;top:277.00px;line-height:22px;font-size:15.7px;color:#444;transform:scaleX(0.9441);transform-origin:0 0;">Properties</span>
<span style="left:1394.8px;top:315.00px;line-height:22px;font-size:15.7px;color:#3c3c3c;transform:scaleX(0.9484);transform-origin:0 0;">Name</span>
<span style="left:1536.8px;top:315.00px;line-height:22px;font-size:15.7px;color:#3c3c3c;transform:scaleX(0.9623);transform-origin:0 0;">Value</span>
<div style="left:1505px;top:312px;width:1px;height:28px;background:#d4d6da;"></div>
<div style="left:1323px;top:340px;width:271.1px;height:1px;background:#d4d6da;"></div>
<svg style="left:1329.1px;top:352.6px;" width="5" height="5" viewBox="0 0 5 5"><path d="M5 0v5H0z" fill="#555"/></svg>
<svg style="left:1338.2px;top:347px;" width="14" height="14" viewBox="0 0 14 14"><rect x=".5" y=".5" width="13" height="13" fill="#fffdf0" stroke="#c9d76e"/><rect x="6" y="3" width="2" height="5" fill="#f08a1c"/><rect x="6" y="9.3" width="2" height="2" fill="#f08a1c"/></svg>
<span style="left:1359.3px;top:343.00px;line-height:22px;font-size:15.8px;color:#7c7c7c;letter-spacing:0.41px;">AndroidSauceDe...</span>
<div style="left:1354px;top:340px;width:1px;height:26px;background:#d4d6da;"></div>
<div style="left:1505px;top:340px;width:1px;height:259.5px;background:#d4d6da;"></div>
<div style="left:1369.5px;top:366px;width:1px;height:233.5px;background:#d4d6da;"></div>
<div style="left:1354px;top:366px;width:240.1px;height:1px;background:#d4d6da;"></div>
<div style="left:1370px;top:392px;width:224.1px;height:1px;background:#d4d6da;"></div>
<div style="left:1370px;top:418px;width:224.1px;height:1px;background:#d4d6da;"></div>
<div style="left:1370px;top:444px;width:224.1px;height:1px;background:#d4d6da;"></div>
<div style="left:1370px;top:470px;width:224.1px;height:1px;background:#d4d6da;"></div>
<div style="left:1370px;top:496px;width:224.1px;height:1px;background:#d4d6da;"></div>
<div style="left:1370px;top:522px;width:224.1px;height:1px;background:#d4d6da;"></div>
<div style="left:1370px;top:547px;width:224.1px;height:1px;background:#d4d6da;"></div>
<div style="left:1370px;top:573px;width:224.1px;height:1px;background:#d4d6da;"></div>
<div style="left:1370px;top:599px;width:224.1px;height:1px;background:#d4d6da;"></div>
<svg style="left:1354px;top:373.17px;" width="13" height="13" viewBox="0 0 13 13"><rect x=".5" y=".5" width="12" height="12" fill="#eef2fb" stroke="#7ba7d6"/><rect x="2.8" y="2.8" width="7.4" height="7.4" fill="#1fb0c0"/></svg>
<span style="left:1374.3px;top:369.00px;line-height:22px;font-size:15.8px;color:#7c7c7c;letter-spacing:0.53px;">NodePath</span>
<span style="left:1510.3px;top:369.00px;line-height:22px;font-size:15.8px;color:#7c7c7c;letter-spacing:0.49px;">/Execution.</span>
<svg style="left:1354px;top:399.04px;" width="13" height="13" viewBox="0 0 13 13"><rect x=".5" y=".5" width="12" height="12" fill="#eef2fb" stroke="#7ba7d6"/><rect x="2.8" y="2.8" width="7.4" height="7.4" fill="#1fb0c0"/></svg>
<span style="left:1374.3px;top:395.00px;line-height:22px;font-size:15.8px;color:#7c7c7c;letter-spacing:0.43px;">CreatedBy</span>
<span style="left:1510.3px;top:395.00px;line-height:22px;font-size:15.8px;color:#7c7c7c;letter-spacing:0.74px;">Admin</span>
<svg style="left:1354px;top:424.91px;" width="13" height="13" viewBox="0 0 13 13"><rect x=".5" y=".5" width="12" height="12" fill="#eef2fb" stroke="#7ba7d6"/><rect x="2.8" y="2.8" width="7.4" height="7.4" fill="#1fb0c0"/></svg>
<span style="left:1374.3px;top:421.00px;line-height:22px;font-size:15.8px;color:#7c7c7c;letter-spacing:0.60px;">CreatedAt</span>
<span style="left:1510.3px;top:421.00px;line-height:22px;font-size:15.8px;color:#7c7c7c;letter-spacing:0.15px;">26-09-202..</span>
<svg style="left:1354px;top:450.78px;" width="13" height="13" viewBox="0 0 13 13"><rect x=".5" y=".5" width="12" height="12" fill="#eef2fb" stroke="#7ba7d6"/><rect x="2.8" y="2.8" width="7.4" height="7.4" fill="#1fb0c0"/></svg>
<span style="left:1374.3px;top:447.00px;line-height:22px;font-size:15.8px;color:#7c7c7c;letter-spacing:0.93px;">ModifiedBy</span>
<span style="left:1510.3px;top:447.00px;line-height:22px;font-size:15.8px;color:#7c7c7c;letter-spacing:0.74px;">Admin</span>
<svg style="left:1354px;top:476.65px;" width="13" height="13" viewBox="0 0 13 13"><rect x=".5" y=".5" width="12" height="12" fill="#eef2fb" stroke="#7ba7d6"/><rect x="2.8" y="2.8" width="7.4" height="7.4" fill="#1fb0c0"/></svg>
<span style="left:1374.3px;top:473.00px;line-height:22px;font-size:15.8px;color:#7c7c7c;letter-spacing:1.09px;">ModifiedAt</span>
<span style="left:1510.3px;top:473.00px;line-height:22px;font-size:15.8px;color:#7c7c7c;letter-spacing:0.15px;">27-09-202..</span>
<svg style="left:1354px;top:502.52px;" width="13" height="13" viewBox="0 0 13 13"><rect x=".5" y=".5" width="12" height="12" fill="#eef2fb" stroke="#7ba7d6"/><rect x="2.8" y="2.8" width="7.4" height="7.4" fill="#1fb0c0"/></svg>
<span style="left:1374.3px;top:498.00px;line-height:22px;font-size:15.8px;color:#7c7c7c;letter-spacing:0.26px;">HasMissingRef...</span>
<span style="left:1510.3px;top:498.00px;line-height:22px;font-size:15.8px;color:#7c7c7c;transform:scaleX(0.9705);transform-origin:0 0;">False</span>
<svg style="left:1354px;top:528.39px;" width="13" height="13" viewBox="0 0 13 13"><rect x=".5" y=".5" width="12" height="12" fill="#eef2fb" stroke="#7ba7d6"/><rect x="2.8" y="2.8" width="7.4" height="7.4" fill="#1fb0c0"/></svg>
<span style="left:1374.3px;top:524.00px;line-height:22px;font-size:15.8px;color:#7c7c7c;letter-spacing:0.78px;">UniqueId</span>
<span style="left:1510.3px;top:524.00px;line-height:22px;font-size:15.8px;color:#7c7c7c;letter-spacing:-0.09px;">3a068c67-..</span>
<svg style="left:1354px;top:554.26px;" width="13" height="13" viewBox="0 0 13 13"><rect x=".5" y=".5" width="12" height="12" fill="#eef2fb" stroke="#7ba7d6"/><rect x="2.8" y="2.8" width="7.4" height="7.4" fill="#1fb0c0"/></svg>
<span style="left:1374.3px;top:550.00px;line-height:22px;font-size:15.8px;color:#7c7c7c;letter-spacing:0.30px;">DisabledDescri...</span>
<svg style="left:1354px;top:580.13px;" width="13" height="13" viewBox="0 0 13 13"><rect x=".5" y=".5" width="12" height="12" fill="#eef2fb" stroke="#7ba7d6"/><rect x="2.8" y="2.8" width="7.4" height="7.4" fill="#1fb0c0"/></svg>
<span style="left:1374.3px;top:576.00px;line-height:22px;font-size:15.8px;color:#111;letter-spacing:0.59px;">Repetitions</span>
<span style="left:1510.3px;top:576.00px;line-height:22px;font-size:15.8px;color:#111;transform:scaleX(0.8526);transform-origin:0 0;">1</span>
<div style="left:1323px;top:805.4px;width:271.1px;height:12.4px;background:#f0f0f0;"></div>
<div style="left:1344.5px;top:805.4px;width:217px;height:12.4px;background:#cdcdcd;"></div>
<svg style="left:1330px;top:809px;" width="4" height="6" viewBox="0 0 4 6"><path d="M3.5 .5L.8 3l2.7 2.5" fill="none" stroke="#555" stroke-width="1"/></svg>
<svg style="left:1581px;top:809px;" width="4" height="6" viewBox="0 0 4 6"><path d="M.5 .5L3.2 3 .5 5.5" fill="none" stroke="#555" stroke-width="1"/></svg>
<span style="left:10.3px;top:825.00px;line-height:22px;font-size:15.7px;color:#fff;transform:scaleX(0.9149);transform-origin:0 0;">Ready</span>
<span style="left:1511.3px;top:825.00px;line-height:22px;font-size:15.7px;color:#fff;transform:scaleX(0.9537);transform-origin:0 0;text-decoration:underline;">User: Admin</span>
</body></html>
